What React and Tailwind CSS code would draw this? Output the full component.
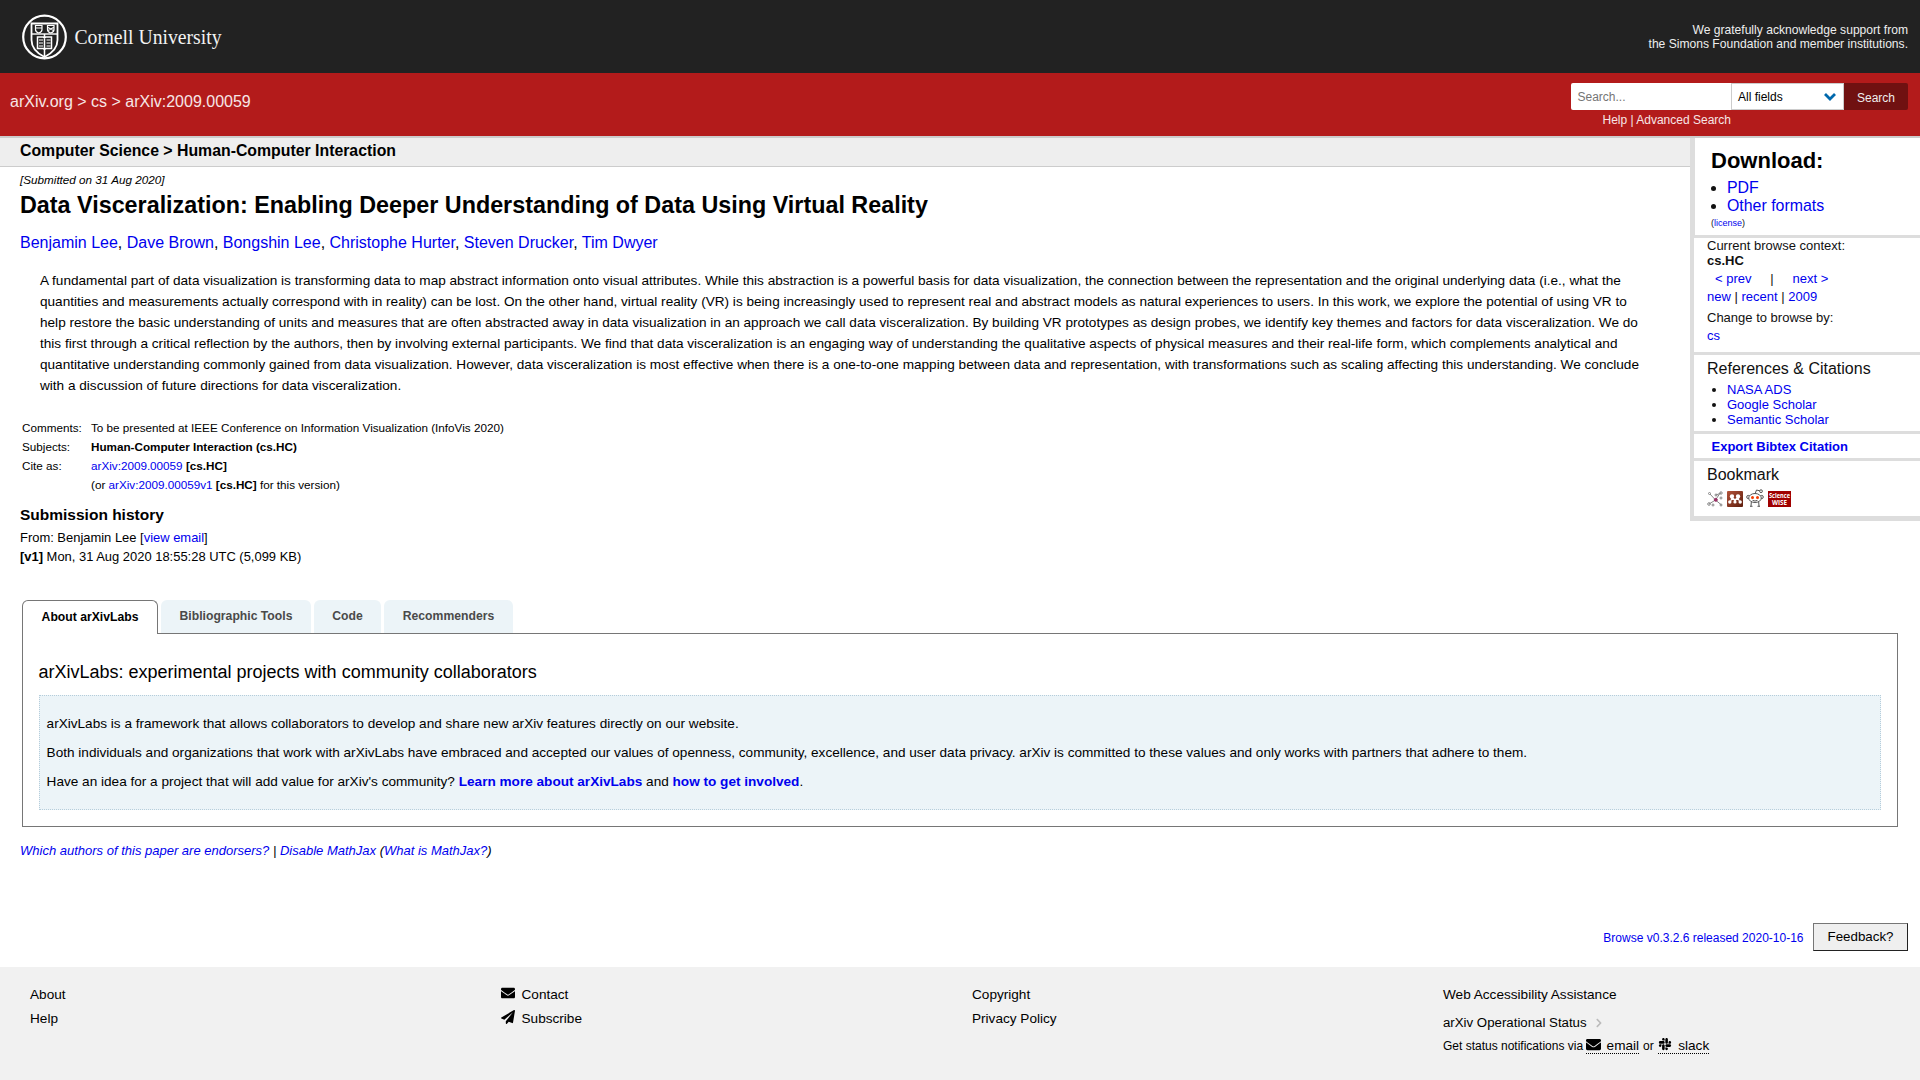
import React from "react";
import { FaEnvelope, FaPaperPlane, FaSlack, FaChevronRight } from "react-icons/fa";

const A = ({ children, className = "" }) => (
  <a href="#" className={"text-[#0000ee] " + className}>{children}</a>
);

function CornellLogo() {
  return (
    <svg width="202" height="46" viewBox="0 0 202 46" fill="none" stroke="#fff">
      <circle cx="22.5" cy="23" r="21.3" strokeWidth="2.200" />
      <path d="M9.500 9.500h26v16.500c0 8-5 13-13 17-8-4-13-9-13-17z" strokeWidth="1.800" />
      <path d="M10 20h25" strokeWidth="1.400" />
      <path d="M13.500 11.500h6.500v4c0 2-1.250 3-3.250 3.500-2-.5-3.250-1.500-3.250-3.500zM25.500 11.500h6.500v4c0 2-1.250 3-3.250 3.500-2-.5-3.250-1.500-3.250-3.500zM14 14h6M26 13.500l5.500 3M31.500 13.500l-5.500 3" strokeWidth="1.200" />
      <path d="M15.500 23h5.500l1.500 1 1.500-1h5.500v11.500h-5.500l-1.500 1-1.500-1h-5.500zM22.500 20v22" strokeWidth="1.500" />
      <path d="M17 26h4M17 29h4M17 32h4M24.500 26h4M24.500 29h4M24.500 32h4" strokeWidth="1" />
      <text x="52.500" y="29.700" fill="#f2f2f2" stroke="none" fontSize="20.500" textLength="147" lengthAdjust="spacingAndGlyphs" fontFamily="'Palatino Linotype', 'Liberation Serif', serif">Cornell University</text>
    </svg>
  );
}

function Header() {
  return (
    <header>
      <div className="flex h-[73px] items-center justify-between bg-[#222] pl-[22px] pr-3 text-[12.100px] leading-[14px] text-white">
        <CornellLogo />
        <p className="text-right text-[#eee]">We gratefully acknowledge support from<br />the Simons Foundation and member institutions.</p>
      </div>
      <div className="flex h-[63px] justify-between bg-[#b31b1b] pl-[10px] pr-3 pt-[10px] text-[#f7e6e6]">
        <div className="pt-[9px] text-[16px] leading-[19px]">arXiv.org &gt; cs &gt; arXiv:2009.00059</div>
        <div className="w-[337px] text-[12px]">
          <div className="flex h-[27px] overflow-hidden rounded-[2px]">
            <div className="w-[160px] bg-white pl-[6.500px] leading-[28px] text-[#757575]">Search...</div>
            <div className="flex w-[113px] items-center justify-between border border-[#ccc] bg-white pl-[6px] pr-[7px] pt-px text-black">
              All fields
              <svg width="12" height="8" viewBox="0 0 12 8" fill="none" stroke="#0068ac" strokeWidth="2.800"><path d="M1 1l5 5 5-5" /></svg>
            </div>
            <div className="w-[64px] bg-[#701111] pt-px text-center leading-[29px] text-[#eee]">Search</div>
          </div>
          <div className="w-[160px] text-right leading-[20px]">Help | Advanced Search</div>
        </div>
      </div>
    </header>
  );
}

function Bookmarks() {
  return (
    <div className="mt-[2px] flex h-[20px] items-end gap-[4px]">
      <svg width="16" height="16" viewBox="0 0 16 16" fill="none" stroke="#888">
        <path d="M8.500 9L3 3M8.500 9l4-6M8.500 9L2 13M8.500 9l6 5M9 4l5-2" />
        <circle cx="2.500" cy="2.500" r="1" /><circle cx="9" cy="4" r="1" /><circle cx="14" cy="2" r="1.200" /><circle cx="14" cy="7" r="1" /><circle cx="2" cy="13" r="1.300" /><circle cx="6" cy="14" r="1" /><circle cx="14" cy="14" r="1" />
        <circle cx="8.800" cy="8.800" r="1.500" fill="#936" stroke="#936" />
      </svg>
      <svg width="16" height="16" viewBox="0 0 16 16">
        <defs><linearGradient id="mendeley" x1="0" y1="0" x2="1" y2="1"><stop offset="0" stopColor="#b4533a" /><stop offset="1" stopColor="#5c1d0c" /></linearGradient></defs>
        <rect width="16" height="16" rx="1" fill="url(#mendeley)" />
        <g fill="#fff">
          <circle cx="5" cy="5.500" r="2.200" /><circle cx="11" cy="5.500" r="2.200" />
          <path d="M3 11l1.500-5h7L13 11l-2-2H9.500L8 11 6.500 9H5z" />
          <circle cx="2.800" cy="11" r="1.700" /><circle cx="8" cy="11" r="1.600" /><circle cx="13.200" cy="11" r="1.700" />
        </g>
        <circle cx="8" cy="6.500" r="1.300" fill="#8f3a24" />
      </svg>
      <svg width="18" height="18" viewBox="0 0 18 18" fill="#fff" stroke="#555" className="-ml-px">
        <path d="M9 5l1.500-4 4 1" fill="none" /><circle cx="15" cy="2.200" r="1.400" />
        <path d="M5.500 11l-.5 6M12.500 11l.5 6M4 17.300h2.500M11.500 17.300h2.500" />
        <circle cx="2.300" cy="8" r="1.600" /><circle cx="15.700" cy="8" r="1.600" />
        <ellipse cx="9" cy="9" rx="6.300" ry="4.500" />
        <circle cx="6.500" cy="8.500" r="1.500" fill="#f43b00" stroke="none" /><circle cx="11.500" cy="8.500" r="1.500" fill="#f43b00" stroke="none" /><path d="M6.500 11.300q2.500 1.500 5 0" fill="none" />
      </svg>
      <svg width="23" height="16" viewBox="0 0 23 16" overflow="visible" fontFamily="'Open Sans', sans-serif" fontWeight="700" fontSize="7" textAnchor="middle">
        <rect width="23" height="16" fill="#a00000" />
        <text x="11.500" y="6.800" fill="#fff" textLength="21" lengthAdjust="spacingAndGlyphs">Science</text>
        <text x="11.500" y="13.800" fill="#fff" textLength="15" lengthAdjust="spacingAndGlyphs">WISE</text>
      </svg>
    </div>
  );
}

function Sidebar() {
  return (
    <aside className="h-[383px] w-[230px] shrink-0 border-b-[5px] border-l-4 border-[#ddd] bg-white text-[13px] leading-[15px] text-[#111]">
      <div className="h-[100px] border-b-[3px] border-l border-[#ddd] pl-4 pt-[9px]">
        <h1 className="text-[22px] font-bold leading-[28px] text-black">Download:</h1>
        <ul className="list-disc pl-4 pt-[4px] text-[15.900px] leading-[18px]">
          <li><A>PDF</A></li>
          <li><A>Other formats</A></li>
        </ul>
        <div className="pt-px text-[9px] leading-[14px]">(<A>license</A>)</div>
      </div>
      <div className="h-[117px] border-b-[3px] border-[#ddd] pl-[13px]">
        <div>Current browse context:</div>
        <div className="font-bold">cs.HC</div>
        <div className="flex pl-2 pt-[3px]"><A>&lt; prev</A><span className="w-[41px] text-center">|</span><A>next &gt;</A></div>
        <div className="pt-[3px]"><A>new</A> | <A>recent</A> | <A>2009</A></div>
        <div className="pt-[6px]">Change to browse by:</div>
        <div className="pt-[3px]"><A>cs</A></div>
      </div>
      <div className="h-[79px] border-b-[3px] border-[#ddd] pl-[13px] pt-[4px]">
        <h3 className="text-[16px] leading-[20px]">References &amp; Citations</h3>
        <ul className="list-disc pl-5 pt-[3px]">
          <li><A>NASA ADS</A></li>
          <li><A>Google Scholar</A></li>
          <li><A>Semantic Scholar</A></li>
        </ul>
      </div>
      <div className="h-[27px] border-b-[3px] border-[#ddd] pl-[17.500px] pt-[5px] font-bold"><A>Export Bibtex Citation</A></div>
      <div className="pl-[13px] pt-[4px]">
        <h3 className="text-[16px] leading-[20px]">Bookmark</h3>
        <Bookmarks />
      </div>
    </aside>
  );
}

const authors = ["Benjamin Lee", "Dave Brown", "Bongshin Lee", "Christophe Hurter", "Steven Drucker", "Tim Dwyer"];

const abstractLines = [
  "A fundamental part of data visualization is transforming data to map abstract information onto visual attributes. While this abstraction is a powerful basis for data visualization, the connection between the representation and the original underlying data (i.e., what the",
  "quantities and measurements actually correspond with in reality) can be lost. On the other hand, virtual reality (VR) is being increasingly used to represent real and abstract models as natural experiences to users. In this work, we explore the potential of using VR to",
  "help restore the basic understanding of units and measures that are often abstracted away in data visualization in an approach we call data visceralization. By building VR prototypes as design probes, we identify key themes and factors for data visceralization. We do",
  "this first through a critical reflection by the authors, then by involving external participants. We find that data visceralization is an engaging way of understanding the qualitative aspects of physical measures and their real-life form, which complements analytical and",
  "quantitative understanding commonly gained from data visualization. However, data visceralization is most effective when there is a one-to-one mapping between data and representation, with transformations such as scaling affecting this understanding. We conclude",
  "with a discussion of future directions for data visceralization.",
];

function Article() {
  return (
    <div className="flex-1">
      <div className="h-[29px] border-b border-[#ccc] bg-[#eee] pl-5 pt-[3px] text-[15.840px] font-bold leading-[19px]">Computer Science &gt; Human-Computer Interaction</div>
      <div className="pl-5">
        <div className="pt-[6px] text-[11.700px] italic leading-[14px]">[Submitted on 31 Aug 2020]</div>
        <h1 className="pt-[4px] text-[23.330px] font-bold leading-[28px]">Data Visceralization: Enabling Deeper Understanding of Data Using Virtual Reality</h1>
        <div className="pt-[12px] text-[16px] leading-[24px]">
          {authors.map((a, i) => <React.Fragment key={a}>{i > 0 && ", "}<A>{a}</A></React.Fragment>)}
        </div>
        <div className="whitespace-nowrap pl-5 pt-[15px] text-[13.600px] leading-[21px]">
          {abstractLines.map((l) => <div key={l}>{l}</div>)}
        </div>
        <div className="grid grid-cols-[69px_1fr] pl-[2px] pt-[22px] text-[11.700px] leading-[19px]">
          <span>Comments:</span><span>To be presented at IEEE Conference on Information Visualization (InfoVis 2020)</span>
          <span>Subjects:</span><b>Human-Computer Interaction (cs.HC)</b>
          <span>Cite as:</span><span><A>arXiv:2009.00059</A> <b>[cs.HC]</b></span>
          <span /><span>(or <A>arXiv:2009.00059v1</A> <b>[cs.HC]</b> for this version)</span>
        </div>
        <h2 className="pt-[12px] text-[15.500px] font-bold leading-[18px]">Submission history</h2>
        <div className="pt-[4px] text-[12.950px] leading-[19px]">From: Benjamin Lee [<A>view email</A>]<br /><b>[v1]</b> Mon, 31 Aug 2020 18:55:28 UTC (5,099 KB)</div>
      </div>
    </div>
  );
}

function Labs() {
  return (
    <section className="px-[22px]">
      <div className="relative -mb-px flex h-[34px] gap-[3px] text-[12.200px] font-bold leading-[32px] text-[#4a4a4a]">
        <div className="w-[136px] rounded-t-[6px] border border-b-0 border-[#767676] bg-white text-center text-black">About arXivLabs</div>
        <div className="mb-px w-[150px] rounded-t-[6px] bg-[#ecf4f8] text-center">Bibliographic Tools</div>
        <div className="mb-px w-[67px] rounded-t-[6px] bg-[#ecf4f8] text-center">Code</div>
        <div className="mb-px w-[129px] rounded-t-[6px] bg-[#ecf4f8] text-center">Recommenders</div>
      </div>
      <div className="h-[194px] border border-[#767676] px-4 pt-[26px]">
        <h1 className="-ml-[0.500px] text-[18px] leading-[24px]">arXivLabs: experimental projects with community collaborators</h1>
        <div className="mt-[11px] h-[115px] border border-dotted border-[#b5cddb] bg-[#ecf4f8] pl-[6.600px] pt-[13px] text-[13.600px] leading-[29px]">
          <p>arXivLabs is a framework that allows collaborators to develop and share new arXiv features directly on our website.</p>
          <p>Both individuals and organizations that work with arXivLabs have embraced and accepted our values of openness, community, excellence, and user data privacy. arXiv is committed to these values and only works with partners that adhere to them.</p>
          <p>Have an idea for a project that will add value for arXiv's community? <A className="font-bold">Learn more about arXivLabs</A> and <A className="font-bold">how to get involved</A>.</p>
        </div>
      </div>
    </section>
  );
}

function Footer() {
  return (
    <footer className="grid h-[113px] grid-cols-[471px_471px_471px_1fr] bg-[#f1f1f1] pl-[30px] pt-4 text-[13.600px] leading-[24px]">
      <div><p>About</p><p>Help</p></div>
      <div>
        <p className="flex"><FaEnvelope className="mr-[6.500px] mt-[3px] h-[14px] w-[14px]" />Contact</p>
        <p className="flex"><FaPaperPlane className="mr-[6.500px] mt-[3px] h-[14px] w-[14px]" />Subscribe</p>
      </div>
      <div><p>Copyright</p><p>Privacy Policy</p></div>
      <div>
        <p>Web Accessibility Assistance</p>
        <p className="flex items-center pt-[4px] text-[13.250px]">arXiv Operational Status <FaChevronRight className="ml-[8px] h-[10px] w-[8px] text-[#bbb]" /></p>
        <p className="text-[12px] leading-[22px]">
          <span className="mr-[3px]">Get status notifications via</span>
          <span className="inline-block border-b border-dotted border-black text-[13.600px] leading-[15px]"><FaEnvelope className="mr-[5.500px] inline h-[15px] w-[15px] align-[-2px]" />email</span>
          <span className="mx-[4px]">or</span>
          <span className="inline-block border-b border-dotted border-black text-[13.600px] leading-[15px]"><FaSlack className="mr-[6.500px] inline h-[14px] w-[14px] align-[-1px]" />slack</span>
        </p>
      </div>
    </footer>
  );
}

export default function App() {
  return (
    <div className="flex h-[1080px] w-[1920px] flex-col overflow-hidden bg-white font-['Liberation_Sans',Arial,sans-serif] text-black">
      <Header />
      <div className="flex h-[464px] border-t-2 border-[#ccc]"><Article /><Sidebar /></div>
      <Labs />
      <div className="pl-5 pt-[15px] text-[13px] italic leading-[18px]"><A>Which authors of this paper are endorsers?</A> | <A>Disable MathJax</A> (<A>What is MathJax?</A>)</div>
      <div className="mb-4 mt-auto flex h-[28px] items-center justify-end gap-[9.500px] pr-3">
        <A className="pt-[2px] text-[12px]">Browse v0.3.2.6 released 2020-10-16</A>
        <button className="h-[28px] w-[95px] border border-b-[#222] border-l-[#767676] border-r-[#222] border-t-[#767676] bg-[#efefef] text-[13.330px]">Feedback?</button>
      </div>
      <Footer />
    </div>
  );
}
